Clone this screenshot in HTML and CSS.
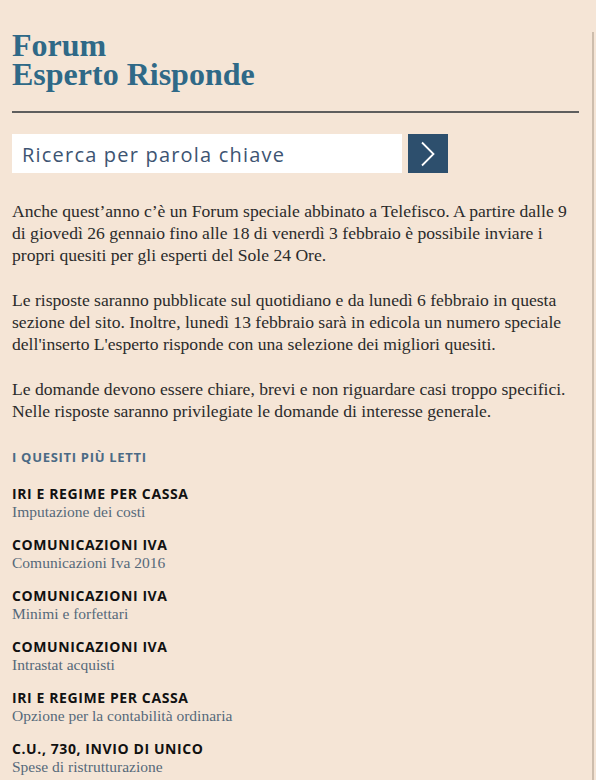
FILE: index.html
```html
<!DOCTYPE html>
<html lang="it">
<head>
<meta charset="utf-8">
<title>Forum Esperto Risponde</title>
<link rel="stylesheet" href="styles.css">
</head>
<body>
<div class="page">
  <div class="main">
    <h1 class="title"><span class="tline">Forum</span><span class="tline">Esperto Risponde</span></h1>
    <hr class="rule">
    <form class="search">
      <div class="search-field">Ricerca per parola chiave</div>
      <button class="search-btn" type="button" aria-label="Cerca">
        <svg width="16" height="26" viewBox="0 0 16 26"><path d="M2 1.5 L13.5 13 L2 24.5" fill="none" stroke="#fff" stroke-width="1.8"/></svg>
      </button>
    </form>
    <div class="intro">
      <p>Anche quest’anno c’è un Forum speciale abbinato a Telefisco. A partire dalle 9 di giovedì 26 gennaio fino alle 18 di venerdì 3 febbraio è possibile inviare i propri quesiti per gli esperti del Sole 24 Ore.</p>
      <p>Le risposte saranno pubblicate sul quotidiano e da lunedì 6 febbraio in questa sezione del sito. Inoltre, lunedì 13 febbraio sarà in edicola un numero speciale dell'inserto L'esperto risponde con una selezione dei migliori quesiti.</p>
      <p>Le domande devono essere chiare, brevi e non riguardare casi troppo specifici. Nelle risposte saranno privilegiate le domande di interesse generale.</p>
    </div>
    <h2 class="section">I QUESITI PIÙ LETTI</h2>
    <ul class="list">
      <li><span class="cat">IRI E REGIME PER CASSA</span><span class="sub">Imputazione dei costi</span></li>
      <li><span class="cat">COMUNICAZIONI IVA</span><span class="sub">Comunicazioni Iva 2016</span></li>
      <li><span class="cat">COMUNICAZIONI IVA</span><span class="sub">Minimi e forfettari</span></li>
      <li><span class="cat">COMUNICAZIONI IVA</span><span class="sub">Intrastat acquisti</span></li>
      <li><span class="cat">IRI E REGIME PER CASSA</span><span class="sub">Opzione per la contabilità ordinaria</span></li>
      <li><span class="cat">C.U., 730, INVIO DI UNICO</span><span class="sub">Spese di ristrutturazione</span></li>
    </ul>
  </div>
  <div class="edge"></div>
</div>
</body>
</html>
```

FILE: styles.css
```css
html, body {
  margin: 0;
  padding: 0;
  background: #f5e5d6;
  height: 100%;
  overflow: hidden;
}
.page {
  display: flex;
  height: 780px;
}
.main {
  width: 567px;
  padding-left: 12px;
  padding-top: 31px;
  flex: none;
}
.edge {
  margin-left: 13px;
  margin-top: 32px;
  width: 2px;
  background: #cdbdad;
  flex: none;
}
.title {
  margin: 0;
  font-family: "Liberation Serif", serif;
  font-weight: bold;
  font-size: 32px;
  line-height: 29px;
  color: #2f6987;
}
.tline {
  display: block;
  height: 29px;
}
.rule {
  margin: 22px 0 0;
  border: 0;
  border-top: 2px solid #5e5e5e;
  height: 0;
}
.search {
  display: flex;
  gap: 6px;
  margin-top: 21px;
  margin-bottom: 0;
}
.search-field {
  width: 380px;
  height: 39px;
  background: #fff;
  padding-left: 10px;
  font-family: "Open Sans", sans-serif;
  font-size: 20px;
  letter-spacing: 1.2px;
  line-height: 41px;
  color: #3d5472;
}
.search-btn {
  width: 40px;
  height: 39px;
  border: 0;
  padding: 0;
  background: #2d4f6d;
  display: flex;
  align-items: center;
  justify-content: center;
}
.intro {
  margin-top: 27px;
  font-family: "Liberation Serif", serif;
  font-size: 17.6px;
  line-height: 22px;
  color: #2b2b2b;
}
.intro p {
  margin: 0 0 23px;
}
.section {
  margin: 26px 0 0;
  font-family: "Open Sans", sans-serif;
  font-weight: bold;
  font-size: 13px;
  letter-spacing: 0.7px;
  line-height: 18px;
  color: #4b6a85;
}
.list {
  list-style: none;
  margin: 20px 0 0;
  padding: 0;
}
.list li {
  display: flex;
  flex-direction: column;
  height: 51px;
}
.cat {
  font-family: "Open Sans", sans-serif;
  font-weight: bold;
  font-size: 14px;
  letter-spacing: 0.6px;
  line-height: 16px;
  color: #111;
}
.sub {
  font-family: "Liberation Serif", serif;
  font-size: 15.5px;
  line-height: 19px;
  color: #56697a;
}
```
